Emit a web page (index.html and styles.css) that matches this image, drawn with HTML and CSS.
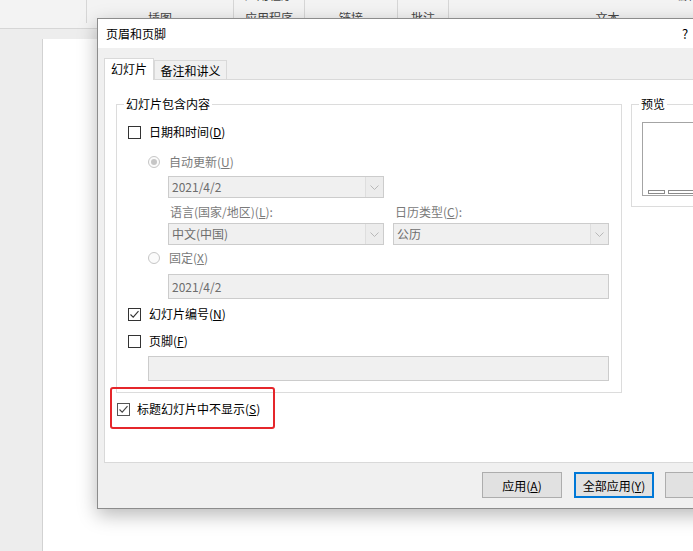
FILE: index.html
```html
<!DOCTYPE html>
<html lang="zh-CN">
<head>
<meta charset="utf-8">
<title>页眉和页脚</title>
<link rel="stylesheet" href="styles.css">
</head>
<body>
<div class="app">
  <div class="ribbon">
    <div class="rgroup g0"></div>
    <div class="rgroup g1"><span class="rlabel">插图</span></div>
    <div class="rgroup g2"><span class="rtop">应用程序</span><span class="rlabel">应用程序</span></div>
    <div class="rgroup g3"><span class="rlabel">链接</span></div>
    <div class="rgroup g4"><span class="rlabel">批注</span></div>
    <div class="rgroup g5"><span class="rtop rtop-right">编辑</span><span class="rlabel">文本</span></div>
  </div>
  <div class="workspace">
    <div class="slide"></div>
  </div>
</div>

<div class="dialog">
  <div class="titlebar">
    <span class="title">页眉和页脚</span>
    <span class="tbtn help">?</span>
    <span class="tbtn close"></span>
  </div>
  <div class="dbody">
    <div class="tabs">
      <div class="tab active">幻灯片</div>
      <div class="tab">备注和讲义</div>
    </div>
    <div class="panel">
      <div class="prow">
        <div class="group main-group">
          <div class="gtitle">幻灯片包含内容</div>

          <div class="row r-check r1">
            <span class="cb"></span><span class="lbl">日期和时间(<u>D</u>)</span>
          </div>

          <div class="row r-radio r2">
            <span class="radio on"></span><span class="lbl dis">自动更新(<u>U</u>)</span>
          </div>

          <div class="row r-field r3">
            <div class="select"><span class="val">2021/4/2</span><span class="arr"><svg width="9" height="5" viewBox="0 0 9 5"><polyline points="0.5,0.5 4.5,4.5 8.5,0.5" fill="none" stroke="#b8b8b8" stroke-width="1"/></svg></span></div>
          </div>

          <div class="row r-field r4">
            <span class="col-label dis">语言(国家/地区)(<u>L</u>):</span>
            <span class="col-label dis">日历类型(<u>C</u>):</span>
          </div>

          <div class="row r-field r5">
            <div class="select"><span class="val">中文(中国)</span><span class="arr"><svg width="9" height="5" viewBox="0 0 9 5"><polyline points="0.5,0.5 4.5,4.5 8.5,0.5" fill="none" stroke="#b8b8b8" stroke-width="1"/></svg></span></div>
            <div class="select"><span class="val">公历</span><span class="arr"><svg width="9" height="5" viewBox="0 0 9 5"><polyline points="0.5,0.5 4.5,4.5 8.5,0.5" fill="none" stroke="#b8b8b8" stroke-width="1"/></svg></span></div>
          </div>

          <div class="row r-radio r6">
            <span class="radio"></span><span class="lbl dis">固定(<u>X</u>)</span>
          </div>

          <div class="row r-field r7">
            <div class="input wide">2021/4/2</div>
          </div>

          <div class="row r-check r8">
            <span class="cb"><svg width="11" height="11" viewBox="0 0 11 11"><polyline points="1.5,5.5 4.2,8.2 9.5,2.2" fill="none" stroke="#333" stroke-width="1.1"/></svg></span><span class="lbl">幻灯片编号(<u>N</u>)</span>
          </div>

          <div class="row r-check r9">
            <span class="cb"></span><span class="lbl">页脚(<u>F</u>)</span>
          </div>

          <div class="row r-radio r10">
            <div class="input footer-input"></div>
          </div>
        </div>

        <div class="group preview-group">
          <div class="gtitle">预览</div>
          <div class="pbox">
            <span class="ph ph1"></span>
            <span class="ph ph2"></span>
            <span class="ph ph3"></span>
          </div>
        </div>
      </div>

      <div class="row r-title">
        <span class="cb"><svg width="11" height="11" viewBox="0 0 11 11"><polyline points="1.5,5.5 4.2,8.2 9.5,2.2" fill="none" stroke="#444" stroke-width="1.1"/></svg></span><span class="lbl">标题幻灯片中不显示(<u>S</u>)</span>
        <span class="mark"></span>
      </div>
    </div>
    <div class="footer">
      <button class="btn first">应用(<u>A</u>)</button>
      <button class="btn default">全部应用(<u>Y</u>)</button>
      <button class="btn">取消</button>
    </div>
  </div>
</div>
</body>
</html>
```
FILE: styles.css
```css
* { box-sizing: border-box; }
html, body { margin: 0; padding: 0; }
body {
  width: 693px;
  height: 551px;
  overflow: hidden;
  position: relative;
  font-family: "Noto Sans CJK SC", "Microsoft YaHei", sans-serif;
  font-size: 12px;
  color: #1a1a1a;
  background: #ededed;
}
u { text-underline-offset: 1px; text-decoration-thickness: 1px; }

/* background application */
.app { height: 551px; display: flex; flex-direction: column; }
.ribbon {
  height: 29px;
  background: #f3f3f3;
  border-bottom: 1px solid #d6d6d6;
  display: flex;
  flex-shrink: 0;
}
.rgroup {
  height: 23px;
  border-right: 1px solid #d6d6d6;
  display: flex;
  flex-direction: column;
  align-items: center;
  justify-content: flex-end;
  color: #444;
  flex-shrink: 0;
}
.g0 { width: 87px; }
.g1 { width: 147px; }
.g2 { width: 71px; }
.g3 { width: 93px; }
.g4 { width: 51px; }
.g5 { width: 317px; border-right: none; }
.rlabel { line-height: 16px; margin-bottom: -3px; white-space: nowrap; }
.rtop { line-height: 16px; margin-bottom: 7px; white-space: nowrap; }
.rtop-right { align-self: flex-start; margin-left: 226px; }
.workspace { flex: 1; padding: 10px 0 0 42px; }
.slide { height: 100%; background: #fff; border-left: 1px solid #d2d2d2; }

/* dialog window */
.dialog {
  position: absolute;
  left: 97px;
  top: 18px;
  width: 660px;
  height: 491px;
  background: #f0f0f0;
  border: 1px solid #8c8c8c;
  box-shadow: 0 6px 18px rgba(0, 0, 0, 0.28);
  display: flex;
  flex-direction: column;
  color: #000;
}
.titlebar {
  height: 29px;
  background: #fff;
  display: flex;
  align-items: center;
  flex-shrink: 0;
}
.title { padding-left: 8px; }
.tbtn { width: 46px; text-align: center; }
.help { margin-left: auto; font-size: 13px; }
.close { margin-right: 2px; }

.dbody {
  flex: 1;
  padding: 10px 6px 0;
  display: flex;
  flex-direction: column;
}
.tabs {
  display: flex;
  align-items: flex-end;
  height: 22px;
  margin-bottom: -1px;
}
.tab {
  height: 20px;
  width: 73px;
  border: 1px solid #d9d9d9;
  background: #f0f0f0;
  display: flex;
  align-items: center;
  justify-content: center;
}
.tab.active {
  height: 22px;
  width: 50px;
  background: #fff;
  border-bottom: none;
  padding-bottom: 2px;
  position: relative;
  z-index: 1;
}
.panel {
  height: 384px;
  background: #fff;
  border: 1px solid #d9d9d9;
  padding-left: 11px;
}
.prow { display: flex; align-items: flex-start; margin-top: 24px; }
.group { border: 1px solid #dcdcdc; }
.main-group { width: 506px; padding-bottom: 11px; }
.gtitle {
  display: block;
  width: max-content;
  margin: -9px 0 0 7px;
  padding: 0 2px;
  background: #fff;
  line-height: 16px;
  height: 16px;
}

.row { display: flex; align-items: center; }
.r-check { height: 20px; margin-left: 11px; }
.r-radio { margin-left: 31px; }
.r-field { margin-left: 51px; }
.lbl { line-height: 20px; white-space: nowrap; }
.dis { color: #7a7a7a; }

.r1 { margin-top: 10px; }
.r2 { margin-top: 10px; height: 20px; }
.r3 { margin-top: 4px; }
.r4 { margin-top: 4px; height: 20px; }
.r5 { margin-top: 1px; gap: 9px; }
.r6 { margin-top: 3px; height: 20px; }
.r7 { margin-top: 6px; }
.r8 { margin-top: 5px; }
.r9 { margin-top: 7px; }
.r10 { margin-top: 5px; }

.cb {
  width: 13px;
  height: 13px;
  border: 1px solid #333;
  background: #fff;
  margin-right: 8px;
  flex-shrink: 0;
  display: flex;
}
.radio {
  width: 12px;
  height: 12px;
  border-radius: 50%;
  border: 1px solid #c6c6c6;
  background: #fbfbfb;
  margin-right: 9px;
  display: flex;
  align-items: center;
  justify-content: center;
  flex-shrink: 0;
}
.radio.on::after {
  content: "";
  width: 6px;
  height: 6px;
  border-radius: 50%;
  background: #c6c6c6;
}
.col-label { width: 225px; padding-left: 2px; line-height: 20px; white-space: nowrap; }

.select {
  width: 216px;
  height: 22px;
  border: 1px solid #cccccc;
  background: #f0f0f0;
  display: flex;
  color: #6d6d6d;
}
.select .val { flex: 1; padding-left: 3px; line-height: 20px; }
.select .arr {
  width: 18px;
  border-left: 1px solid #dedede;
  background: #ececec;
  display: flex;
  align-items: center;
  justify-content: center;
}
.input {
  height: 25px;
  border: 1px solid #cccccc;
  background: #f0f0f0;
  color: #6d6d6d;
  padding-left: 3px;
  line-height: 23px;
}
.input.wide { width: 441px; }
.footer-input { width: 461px; }

.preview-group { width: 110px; margin-left: 9px; padding: 0 0 10px 0; }
.pbox {
  margin: 10px 0 0 10px;
  width: 100px;
  height: 74px;
  border: 1px solid #a4a4a4;
  background: #fff;
  display: flex;
  align-items: flex-end;
  gap: 3px;
  padding: 0 4px 1px 5px;
}
.ph { height: 4px; border: 1px solid #8a8a8a; background: #fff; }
.ph1 { width: 18px; }
.ph2 { width: 50px; }
.ph3 { width: 18px; margin-left: auto; }

.r-title { margin-top: 6px; margin-left: 1px; height: 20px; position: relative; }
.r-title .cb { border-color: #555; margin-right: 7px; }
.mark {
  position: absolute;
  left: -7px;
  top: -12px;
  width: 165px;
  height: 42px;
  border: 2px solid #e5262b;
  border-radius: 3px;
}

.footer {
  display: flex;
  justify-content: flex-end;
  gap: 11px;
  padding: 9px 5px 0 0;
}
.btn {
  width: 80px;
  height: 26px;
  border: 1px solid #adadad;
  background: #e1e1e1;
  font-family: inherit;
  font-size: 12px;
  color: #000;
  padding: 0;
}
.btn.first { margin-right: 1px; }
.btn.default { border: 2px solid #0078d7; }
```
